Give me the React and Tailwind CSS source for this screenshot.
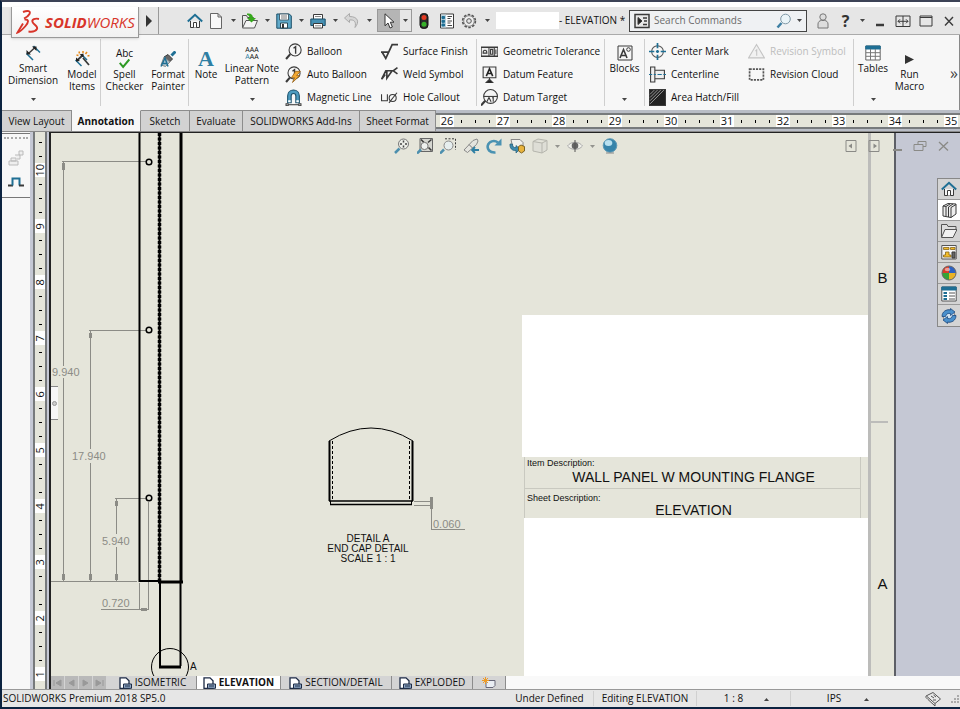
const INK = '#3a3a3a';
const BLUE = '#1f6f94';
const SKY = '#5fa9c9';
const GRAY = '#8a8a86';

function Svg({ children, size = 'size-4' }) {
  return (
    <svg viewBox="0 0 16 16" className={`${size} shrink-0`} fill="none" stroke={INK} strokeWidth="1" aria-hidden="true">
      {children}
    </svg>
  );
}

const ICONS = {
  home: <>
    <path d="M3.5 8v6.5h9V8" fill="#f4f4f4" />
    <path d="M6.5 14.5v-5h3v5" fill="#fff" />
    <path d="M.8 8.6 8 1.8l7.2 6.8" stroke={BLUE} strokeWidth="2" />
  </>,
  page: <path d="M2.500 .5h7.500l3.500 3.500v11.500h-11z M10 .5V4h3.500" fill="#f8f8f8" stroke="#666" />,
  open: <>
    <path d="M.5 14V2.500h4l1 2h6v3" fill="#e9e9e9" stroke="#555" />
    <path d="M.5 15 4 7.500h11.500l-3 7.500z" fill="#f4f4f4" stroke="#555" />
    <path d="M5 .5c4-.5 6 1 6 4.500h3l-4.500 4.500L5 5h2.500c0-2-1-3-2.500-3z" fill="#36a81c" stroke="none" />
  </>,
  save: <>
    <path d="M.8 1h12.500l2 2v12.200H.8z" fill={SKY} stroke="#1b4f69" />
    <path d="M3.500 1h9v6h-9z" fill="#fff" stroke="#46616e" />
    <path d="M5 3h6M5 5h6" stroke="#777" />
    <path d="M4.500 10h7v5h-7z" fill="#fff" stroke="#2a4856" />
    <path d="M6 11h2v4H6z" fill="#333" stroke="none" />
  </>,
  print: <>
    <path d="M3.500 6V1.500h9V6" fill="#fff" />
    <path d="M.8 6h14.400v6.500H.8z" fill="#4690b3" stroke="#1b4f69" />
    <path d="M3.500 10.500h9v4.500h-9z" fill="#fff" />
    <path d="M5 3.500h6M5 12.800h6" stroke="#888" />
  </>,
  undo: <path d="M5.500 .5 .5 5l5 4.500V7C10 6.500 12.500 8.500 11 14.500c4.500-5 3.500-11-5.500-11z" fill="#d6d6d6" stroke="#aaa" />,
  pointer: <path d="M4 .8v12l3-2.800 2 5 2.400-1-2.100-4.800H13z" fill="#fff" stroke="#333" />,
  traffic: <>
    <rect x="4" y=".5" width="8" height="15" rx="3.500" fill="#2b2b2b" stroke="#111" />
    <circle cx="8" cy="4.600" r="2.500" fill="#e23a22" stroke="none" />
    <circle cx="8" cy="11.200" r="2.500" fill="#37b12a" stroke="none" />
  </>,
  options: <>
    <path d="M1.500 1h13v14h-13z" fill="#fff" />
    <path d="M2 1.500h5v13H2z" fill="#bcd3de" stroke="none" />
    <path d="M3 3.500h2.500v2H3z M3 7.300h2.500v2H3z M3 11h2.500v2H3z" fill={BLUE} stroke={BLUE} />
    <path d="M8.500 3.500H13M8.500 5.500h3M8.500 8H13M8.500 10h3M8.500 12.500H13" stroke="#444" />
  </>,
  gear: <>
    <circle cx="8" cy="8" r="6.300" fill="#eee" stroke="#555" strokeWidth="1.800" strokeDasharray="2.500 1.450" />
    <circle cx="8" cy="8" r="5.300" fill="#eee" stroke="#888" />
    <circle cx="8" cy="8" r="2.300" fill="#e6e6e6" stroke="#555" />
  </>,
  user: <>
    <circle cx="8" cy="4" r="3.200" fill="#ddd" stroke="#777" />
    <path d="M3 15v-4c0-2 1.500-3.500 3.500-3.500h3C11.500 7.500 13 9 13 11v4z" fill="#ddd" stroke="#777" />
  </>,
  minimize: <path d="M4 12h8" strokeWidth="2.500" />,
  span: <path d="M1 3h14v10.500H1zM8 3v10.500M3 8.300h10M5 6.300 3 8.300l2 2M11 6.300l2 2-2 2" />,
  maximize: <path d="M2 3h12v10H2zM2 4.500h12" />,
  close: <path d="m4 4 8 8.500M12 4l-8 8.500" strokeWidth="1.400" />,
  prompt: <>
    <path d="M1 1.500h14v13H1z" fill="#e8e8e8" strokeWidth="1.500" />
    <path d="M4 4.500 8 8l-4 3.500z" fill="#222" />
    <path d="M9 5h4M10 8h3M9 11.500h4" strokeWidth="1.500" />
  </>,
  search: <>
    <path d="m1.500 14.500 4-4.500" stroke="#3d7fa3" strokeWidth="2.500" />
    <circle cx="9.500" cy="6" r="4.800" fill="#eaf4f8" stroke="#7e97a5" />
  </>,
  dimension: <>
    <path d="m1.500 8.500 6.500 6.500M8.500 1l6.500 6.500" stroke={BLUE} strokeWidth="1.500" />
    <path d="m3.500 8.500 6.500-6" strokeWidth="1.500" />
    <path d="M1.500 9.500V5l4.500 4.500zM11.500 1.500v4.500L7 1.500z" fill="#222" stroke="none" />
  </>,
  model: <>
    <path d="m1.500 9 6 6M8 4l5 5" stroke={BLUE} strokeWidth="1.500" />
    <path d="m3 9.500 6-5.500M9 7l6 7" strokeWidth="1.800" />
    <path d="M2 10.500v-4l4 3.500zM9.500 2.500v4l-4-3z" fill="#222" stroke="none" />
    <path d="m5 .5.5 2M9 0v2M13 1l-1.500 2M15.500 4.500l-2 .5M2.500 4l2 .5" stroke="#e58a1c" strokeWidth="1.500" />
  </>,
  check: <path d="m1 7 5 6L15 2" stroke="#2f9a25" strokeWidth="3" />,
  painter: <>
    <path d="m15.500 .5-4 4" stroke={BLUE} strokeWidth="3" />
    <path d="m8 3.500 4.500 4.500-3 3-5.500-5z" fill="#666" />
    <path d="m4 6-3 8 4.500 1.500L10 11z" fill="#b7c7d0" stroke="#888" />
    <path d="m1 15.500 4-8.500 3 8.500M3 12.500h4" stroke={BLUE} strokeWidth="1.500" />
  </>,
  balloon: <>
    <path d="m1 15 4-4.500" strokeWidth="2" />
    <circle cx="9.500" cy="6.500" r="5.700" fill="#f6f6f6" />
    <path d="m8 5 2-1.500V10" strokeWidth="1.300" />
  </>,
  autoBalloon: <>
    <path d="m1 15 4-4.500" strokeWidth="2" />
    <circle cx="8.500" cy="6.500" r="5.700" fill="#f6f6f6" />
    <path d="m7 5 2-1.500V8" strokeWidth="1.300" />
    <path d="m10 5-4 6h3l-2 4.500 7-6.500h-3L14.500 5z" fill="#f2a832" stroke="#8f5a12" strokeWidth=".7" />
  </>,
  magnet: <>
    <path d="M2.500 13V6.500C2.500 3 5 1 8 1s5.500 2 5.500 5.500V13h-3.300V6.500C10.200 5 9.300 4.200 8 4.200S5.800 5 5.800 6.500V13z" fill="#4d9cc0" stroke="#1b4f69" />
    <path d="M3 11.500h2.300M10.700 11.500h2.300" stroke="#fff" strokeWidth="2" />
    <path d="M3 14.800h10" />
    <path d="M1 13.800h2v2H1zM13 13.800h2v2h-2z" fill="#fff" />
  </>,
  surface: <path d="M0 8.500h7.500M1 8.500 4.500 14.500 10.500 1.500H16" strokeWidth="1.600" />,
  weld: <path d="m.5 12.500 4-8H12M5.500 4.500v7l5-7M15.500 1.500l-4 3 4 3M1 12l3-4" strokeWidth="1.500" />,
  hole: <>
    <path d="M.5 5v6H6V5" />
    <circle cx="11" cy="8.500" r="3.300" />
    <path d="m7.500 13 7.500-9.500" />
  </>,
  tolerance: <>
    <path d="M0 4h16v8.500H0z" fill="#eee" strokeWidth="1.300" />
    <path d="M7.500 4v8.500M12.500 4v8.500M2 9.500C2 6 5.500 6 5.500 9.500zM9 6h2v4.500H9zM14 6v4.500" />
  </>,
  datum: <>
    <path d="M2 1h12v10H2z" fill="#f4f4f4" />
    <path d="m5 9.500 3-7 3 7M6 7h4" stroke="#222" strokeWidth="1.500" />
    <path d="M8 11v2M4.500 16 8 12.500l3.500 3.500z" fill="#222" />
  </>,
  target: <>
    <circle cx="9" cy="7" r="6.500" fill="#f4f4f4" />
    <path d="M2.500 7h13" />
    <path d="M4 11 0 15.500" strokeWidth="2" />
    <path d="m5.500 12 2-4 2 4M10.500 8.500l1-.5v4" />
  </>,
  blocks: <>
    <path d="M1 1h14v14H1z" fill="#f6f6f6" />
    <path d="m3 13 3.500-8.500L10 13M4 10.500h5" strokeWidth="1.600" />
    <circle cx="11.500" cy="4.500" r="1.800" />
  </>,
  centerMark: <>
    <circle cx="8" cy="8" r="5.500" stroke="#555" />
    <path d="M8 0v5M8 11v5M0 8h5M11 8h5M8 6.500v3M6.500 8h3" stroke={BLUE} strokeWidth="1.600" />
  </>,
  centerline: <>
    <path d="M1.500 1h4v14h-4zM5.500 4h9v8h-9" fill="#eee" />
    <path d="M0 8h3M4.500 8h2M8 8h4M13.500 8H16" stroke={BLUE} />
  </>,
  hatch: <>
    <path d="M.5 .5h15v15H.5z" fill="#222" />
    <path d="M1 5l4-4M1 8l7-7M1 11l10-10M1 14 14 1" stroke="#aaa" strokeWidth=".8" />
  </>,
  revSymbol: <path d="M8 1.500 15.500 14H.5zM7 7.500l1.200-1V12" fill="#f1f1f1" stroke="#c4c4c4" />,
  revCloud: <path d="M1.500 3h13v10h-13z" stroke="#555" strokeWidth="1.600" strokeDasharray="2 1" />,
  table: <>
    <path d="M.8 1h14.400v14H.8z" fill="#fff" stroke="#666" />
    <path d="M.8 1h14.400v3H.8z" fill={BLUE} stroke={BLUE} />
    <path d="M5.500 4v11M10.300 4v11M1 7.700h14M1 11.300h14" stroke="#777" />
  </>,
  zoomFit: <>
    <path d="m1 15 4.500-4.500" stroke="#4c8fae" strokeWidth="2.500" />
    <circle cx="9.500" cy="6" r="5" fill="#eceee8" stroke="#777" />
    <path d="M9.500 2.500v2M9.500 7.500v2M6 6h2M11 6h2" stroke="#444" strokeWidth="1.500" />
  </>,
  zoomArea: <>
    <path d="M3 .5h12.500v13H3z" fill="#d5d6d0" stroke="#666" />
    <path d="m14.500 1.500-3.500 3M14.500 12.500l-3-3M4 1.500l3 3" strokeWidth="1.500" />
    <path d="m0 15.500 4-4" stroke="#4c8fae" strokeWidth="2.500" />
    <circle cx="7.500" cy="8" r="3.600" fill="#eef1ef" stroke="#777" />
  </>,
  zoomSel: <>
    <path d="M5 .8h10.500v11" strokeDasharray="2 1.500" />
    <path d="m0 15.500 4-4" stroke="#4c8fae" strokeWidth="2.500" />
    <circle cx="8.500" cy="7.500" r="4.500" fill="#e6eeee" stroke="#888" />
  </>,
  section: <>
    <path d="m1 12 9-9.500 4-1.500 1 2-1.500 3.500-9 8z" fill="#e4e4de" stroke="#888" />
    <path d="m6 6.500 3.500 3.500" stroke="#777" />
    <path d="M16 12h-6M12 9l-3 3 3 3" stroke="#2f7fa3" strokeWidth="1.800" />
  </>,
  rotate: <>
    <path d="M9.500 14.500C3.500 15 1 11 1.800 7.500c1-4 6.200-6 10.200-3" stroke="#4a92b2" strokeWidth="2.600" />
    <path d="M15.500 .5v7H8.500z" fill="#4a92b2" stroke="none" />
  </>,
  view3d: <>
    <path d="M2 1.500h9l3 3v6H4z" fill="#f0f0ec" stroke="#888" />
    <path d="M1 6c-.5 4 2 7 6 6.500V15l4-4-4-3.500v2C5 9.800 3.500 9 3.500 6z" fill="#3f8aac" stroke="#1f5d7a" strokeWidth=".7" />
    <path d="M9.500 8.500 12 7l3.500 1.500V13l-3 2-3-2z" fill="#e8b33c" stroke="#7d6424" />
  </>,
  cube: <path d="M1 3.500 6 1l9 1.500V12l-5 3-9-2zM1 3.500l9 1.500 5-2.500M10 5v10" fill="#deded6" stroke="#b5b5ad" />,
  eye: <>
    <path d="M.5 8C4 3 12 3 15.500 8 12 12.500 4 12.500.5 8z" fill="#f0f0ea" stroke="#aaa" />
    <circle cx="8" cy="7.800" r="3.300" fill="#666" stroke="none" />
    <path d="M8 2v12" stroke="#555" />
  </>,
  sphere: <>
    <circle cx="8" cy="7.500" r="6.800" fill="#3784aa" stroke="#5f9ab5" />
    <ellipse cx="6.500" cy="5" rx="3.800" ry="3" fill="#b9e0ef" stroke="none" />
    <path d="M4 15h8" stroke="#888" />
  </>,
  dockLeft: <>
    <path d="M3 2.500h10v11H3z" stroke={GRAY} />
    <path d="M9 5.500 5.500 8 9 10.500z" fill={GRAY} stroke="none" />
  </>,
  dockRight: <>
    <path d="M3 2.500h10v11H3z" stroke={GRAY} />
    <path d="M7.500 5.500 11 8l-3.500 2.500z" fill={GRAY} stroke="none" />
  </>,
  docMin: <path d="M4 12h9" stroke={GRAY} strokeWidth="2" />,
  docRestore: <path d="M6 6.500v-3h8v5h-3M2 6.500h9v6H2z" stroke={GRAY} />,
  docClose: <path d="m4 4 9 8.500M13 4l-9 8.500" stroke={GRAY} strokeWidth="1.300" />,
  library: <path d="M2 4 7 1.500l8 .5v10L10 15.500 2 14zM2 4l3 .5v10M5 4.500 9 2M7.500 5v10M7.500 5 12 2M10 5.500v10M10 5.500l5-3" fill="#eee" />,
  folder: <>
    <path d="M.5 14V1.500h5.500l1 2h8V7" fill="#ddd" stroke="#555" />
    <path d="M.5 14.500 4 6.500h12l-4 8z" fill="#f2f2f2" stroke="#555" />
  </>,
  palette: <>
    <path d="M.8 1.500h14.400V15H.8z" fill="#f6f6f6" stroke="#555" />
    <path d="M2.500 3.500h5.500v2H2.500zM9.500 3.500H14v2H9.500zM4.500 8h3.500v3H10v2H2.500v-2h2z" fill="#f4bd2a" stroke="#86641b" strokeWidth=".8" />
    <path d="M11 8h3v6h-3z" fill="#666" />
  </>,
  appearance: <>
    <path d="M8 8V1a7 7 0 0 0-7 7z" fill="#d83b2a" stroke="none" />
    <path d="M8 8V1a7 7 0 0 1 7 7z" fill="#2b62c4" stroke="none" />
    <path d="M8 8h7a7 7 0 0 1-7 7z" fill="#e9b326" stroke="none" />
    <path d="M8 8v7a7 7 0 0 1-7-7z" fill="#35a336" stroke="none" />
    <circle cx="8" cy="8" r="7" stroke="#666" />
    <ellipse cx="6.500" cy="4.500" rx="2.800" ry="1.800" fill="#fff" opacity=".5" stroke="none" />
  </>,
  props: <>
    <path d="M.8 1h14.400v14H.8z" fill="#fff" stroke="#555" />
    <path d="M.8 1h14.400v3H.8z" fill={BLUE} stroke={BLUE} />
    <path d="M2.500 7H6M2.500 10H6M2.500 13H6" stroke={BLUE} strokeWidth="2" />
    <path d="M8 7h6M8 10h6M8 13h6" stroke="#555" />
  </>,
  forum: <>
    <circle cx="8" cy="8" r="6" fill="#cfe1ef" stroke="#777" />
    <path d="M1 8.500C1 3.500 5.500 1 9.500 2V.5l4.500 3.500-4.500 3.500V5.500C7 5 5 6 4.500 8.500zM15 7.500c0 5-4.500 7.500-8.500 6.500v1.500L2 12l4.500-3.500v2c3 .5 4.500-.5 5-3z" fill="#4a90cc" stroke="#204a80" strokeWidth=".8" />
  </>,
  feedback: <path d="M1 5 8 1.500 15.500 8 10 12.500v2.500L3 8.500 1 6.500zM10 12.500 2 5.500M6 5l3 2M8.500 4l2.500 2M8 9h3" fill="#e9e9e9" stroke="#555" />,
};

const Icon = ({ name, size }) => <Svg size={size}>{ICONS[name]}</Svg>;

const Caret = ({ up, className = '' }) => (
  <svg viewBox="0 0 5 3" className={`h-[3px] w-[5px] shrink-0 ${className}`} aria-hidden="true">
    <path d={up ? 'M0 3h5L2.500 0z' : 'M0 0h5L2.500 3z'} fill="#444" />
  </svg>
);

const CaretButton = ({ label }) => (
  <button aria-label={label} className="flex h-full w-[14px] items-center justify-center"><Caret /></button>
);

function QuickAccess() {
  const items = [
    ['New', 'page'], ['Open', 'open'], ['Save', 'save'], ['Print', 'print'], ['Undo', 'undo'],
  ];
  return (
    <div className="ml-[25px] flex h-full shrink-0 items-center">
      <button aria-label="Home" className="flex w-[22px] justify-center"><Icon name="home" /></button>
      {items.map(([label, icon]) => (
        <div key={label} className="flex h-full items-center">
          <button aria-label={label} className="flex w-5 justify-center"><Icon name={icon} /></button>
          <CaretButton label={`${label} menu`} />
        </div>
      ))}
      <div className="ml-px flex h-[23px] border border-[#999]">
        <button aria-label="Select" className="flex w-[22px] items-center justify-center bg-[#b5b5b5]"><Icon name="pointer" /></button>
        <button aria-label="Select menu" className="flex w-[11px] items-center justify-center"><Caret /></button>
      </div>
      <button aria-label="Rebuild" className="flex w-6 justify-center"><Icon name="traffic" /></button>
      <button aria-label="File properties" className="flex w-[22px] justify-center"><Icon name="options" /></button>
      <button aria-label="Options" className="flex w-[22px] justify-center"><Icon name="gear" /></button>
      <CaretButton label="Options menu" />
    </div>
  );
}

function TitleBar() {
  return (
    <header className="relative z-10 flex h-7 items-center border-b border-[#aaa] bg-[#e6e6e6]">
      <div className="ml-[9px] flex h-[31px] w-[128px] shrink-0 items-center gap-[3px] self-start border border-t-0 border-[#999] bg-linear-to-b from-white to-[#f1f1f1] pl-1 shadow-sm">
        <svg viewBox="0 0 26 26" className="size-[26px] shrink-0" fill="none" stroke="#d8352a" strokeWidth="1.900" aria-hidden="true">
          <path d="M7 3c5-2 8-1 6.500 2C12.500 7 10 8.500 8 9.500" />
          <path d="M8.500 10.500c5-.5 4 3 1 6.500S3 23 1.500 23.500L7 14.500" />
          <path d="M23 10c-4-1-7.500.5-6.500 3s6 4.500 4.500 7-5 3-8.500 2.500" />
        </svg>
        <span className="text-[15px] leading-none whitespace-nowrap text-[#d8352a] italic"><b>SOLID</b>WORKS</span>
      </div>
      <button aria-label="Expand menu" className="flex h-full w-5 shrink-0 items-center justify-center border-r border-[#999]">
        <svg viewBox="0 0 6 12" className="h-3 w-[6px]" aria-hidden="true"><path d="M0 0v12l6-6z" fill="#333" /></svg>
      </button>
      <QuickAccess />
      <div className="ml-[2px] h-[17px] w-[63px] shrink-0 bg-white" />
      <h1 className="text-[10px] whitespace-nowrap">- ELEVATION *</h1>
      <label className="ml-auto flex h-[22px] w-[178px] shrink-0 items-center border border-[#444] bg-[#eff1f3] pl-1">
        <Icon name="prompt" />
        <input type="text" aria-label="Search Commands" placeholder="Search Commands" className="ml-1 w-0 flex-1 text-[10px] outline-none placeholder:text-[#6b6b6b]" />
        <Icon name="search" />
        <span className="flex w-[14px] items-center justify-center"><Caret /></span>
      </label>
      <div className="ml-1 flex h-full shrink-0 items-center">
        <button aria-label="Sign in" className="flex w-[23px] justify-center"><Icon name="user" /></button>
        <button aria-label="Help" className="w-[23px] text-[16px] leading-none font-bold text-[#333]">?</button>
        <button aria-label="Help menu" className="flex w-[11px] justify-center"><Caret /></button>
        {['minimize', 'span', 'maximize', 'close'].map(n => (
          <button key={n} aria-label={n} className="flex w-[23px] justify-center"><Icon name={n} /></button>
        ))}
      </div>
    </header>
  );
}

function BigButton({ lines, menu, width, children }) {
  return (
    <button className={`flex shrink-0 flex-col items-center self-stretch pb-[9px] ${menu ? 'pt-[10px]' : 'pt-4'} ${width}`}>
      <span className="flex h-4 items-center justify-center">{children}</span>
      <span className="mt-px flex flex-col items-center leading-3 whitespace-nowrap">
        {lines.map(l => <span key={l}>{l}</span>)}
      </span>
      {menu && <Caret className="mt-auto" />}
    </button>
  );
}

function SmallColumn({ items, width }) {
  return (
    <div className={`flex shrink-0 flex-col pt-[5px] pl-1 ${width}`}>
      {items.map(([label, icon, disabled]) => (
        <button key={label} disabled={disabled} className={`flex h-[23px] items-center gap-[5px] whitespace-nowrap ${disabled ? 'text-[#bdbdbd]' : ''}`}>
          <Icon name={icon} size="size-[17px]" />
          {label}
        </button>
      ))}
    </div>
  );
}

const Divider = () => <span className="my-1 w-px shrink-0 bg-[#cfcfcf]" />;

function Ribbon() {
  return (
    <div className="flex h-[75px] shrink-0 overflow-hidden border-r border-[#888] bg-[#f7f7f7] text-[10px]">
      <BigButton lines={['Smart', 'Dimension']} menu width="w-[62px]"><Icon name="dimension" /></BigButton>
      <BigButton lines={['Model', 'Items']} width="w-[36px]"><Icon name="model" /></BigButton>
      <Divider />
      <BigButton lines={['Spell', 'Checker']} width="w-[47px]">
        <span className="flex flex-col items-center">
          <span className="leading-[9px]">Abc</span>
          <Svg size="size-[11px]">{ICONS.check}</Svg>
        </span>
      </BigButton>
      <BigButton lines={['Format', 'Painter']} width="w-[40px]"><Icon name="painter" /></BigButton>
      <Divider />
      <BigButton lines={['Note']} width="w-[34px]">
        <span className="font-['Liberation_Serif',serif] text-[22px] leading-4 font-bold text-[#2f7fa3]">A</span>
      </BigButton>
      <BigButton lines={['Linear Note', 'Pattern']} menu width="w-[58px]">
        <span className="flex flex-col text-[7px] leading-[7px]"><span>AAA</span><span><span className="text-[#2f7fa3]">A</span>AA</span></span>
      </BigButton>
      <SmallColumn width="w-[96px]" items={[['Balloon', 'balloon'], ['Auto Balloon', 'autoBalloon'], ['Magnetic Line', 'magnet']]} />
      <SmallColumn width="w-[99px]" items={[['Surface Finish', 'surface'], ['Weld Symbol', 'weld'], ['Hole Callout', 'hole']]} />
      <Divider />
      <SmallColumn width="w-[127px]" items={[['Geometric Tolerance', 'tolerance'], ['Datum Feature', 'datum'], ['Datum Target', 'target']]} />
      <Divider />
      <BigButton lines={['Blocks']} menu width="w-[39px]"><Icon name="blocks" /></BigButton>
      <Divider />
      <SmallColumn width="w-[99px]" items={[['Center Mark', 'centerMark'], ['Centerline', 'centerline'], ['Area Hatch/Fill', 'hatch']]} />
      <SmallColumn width="w-[109px]" items={[['Revision Symbol', 'revSymbol', true], ['Revision Cloud', 'revCloud']]} />
      <Divider />
      <BigButton lines={['Tables']} menu width="w-[38px]"><Icon name="table" /></BigButton>
      <BigButton lines={['Run', 'Macro']} width="w-[35px]">
        <svg viewBox="0 0 9 9" className="size-[9px]" aria-hidden="true"><path d="M0 0v9l9-4.500z" fill="#333" /></svg>
      </BigButton>
      <button aria-label="More commands" className="mr-px ml-auto text-[16px] text-[#444]">»</button>
    </div>
  );
}

const TABS = [
  ['View Layout', 'w-[70px]'], ['Annotation', 'w-[69px]'], ['Sketch', 'w-[49px]'],
  ['Evaluate', 'w-[53px]'], ['SOLIDWORKS Add-Ins', 'w-[117px]'], ['Sheet Format', 'w-[76px]'],
];
const TICKS = [1, 2, 3];

function TabRow() {
  return (
    <div className="flex h-[21px] shrink-0 bg-[#b9bdc6]">
      <nav className="flex shrink-0 text-[10px]">
        {TABS.map(([label, width]) => (
          <button
            key={label}
            className={`border-t border-r border-[#8c8c8c] whitespace-nowrap ${width} ${label === 'Annotation' ? 'border-t-[#f7f7f7] bg-[#f7f7f7] font-bold' : 'bg-[#d2d2d2]'}`}
          >
            {label}
          </button>
        ))}
      </nav>
      <div className="mt-[3px] mb-[2px] flex min-w-0 flex-1 overflow-hidden border-2 border-x-0 border-[#777a7c] bg-[#e5e5da] pl-1 text-[11px]">
        {[26, 27, 28, 29, 30, 31, 32, 33, 34, 35].map(n => (
          <div key={n} className="flex w-14 shrink-0 items-center">
            <span className="flex h-full w-[14px] items-center justify-center bg-white">{n}</span>
            {TICKS.map(t => <span key={t} className="flex w-[14px] justify-center"><i className="h-[3px] w-px bg-black" /></span>)}
          </div>
        ))}
      </div>
    </div>
  );
}

function SideRuler() {
  return (
    <div className="flex w-[14px] shrink-0 flex-col overflow-hidden border-x-2 border-[#777a7c] bg-[#e5e5da] pt-[3px] text-[11px]">
      {[10, 9, 8, 7, 6, 5, 4, 3, 2, 1].map((n, i) => (
        <div key={n} className="flex shrink-0 flex-col">
          {TICKS.slice(i === 0 ? 1 : 0).map(t => <span key={t} className="flex h-[14px] items-center justify-center"><i className="h-px w-[3px] bg-black" /></span>)}
          <span className="flex h-[14px] items-center justify-center bg-white"><span className="-rotate-90">{n}</span></span>
        </div>
      ))}
    </div>
  );
}

function SideTools() {
  return (
    <aside className="w-7 shrink-0 bg-[#f7f7f7] pt-px">
      <div className="flex flex-col items-center gap-[7px] border-y border-[#777] pt-[3px] pb-2">
        <span className="w-6 border-t-2 border-dotted border-[#aaa]" />
        <button aria-label="Layers" className="mt-1">
          <Svg><path d="M1 11h9v4H1zM3 8h5v3H3zM7 5h5v4H9M11 1h4v4h-4z" fill="#eee" stroke="#bbb" /></Svg>
        </button>
        <button aria-label="Jog">
          <Svg><path d="M0 12.500h5" strokeWidth="2" /><path d="M4.500 12.500v-7h7v7" stroke={BLUE} strokeWidth="2" /><path d="M11 12.500h5" strokeWidth="2" /></Svg>
        </button>
      </div>
    </aside>
  );
}

// Part elevation with its dimensions, and the enlarged end cap
function Drawing() {
  return (
    <svg viewBox="51 133 471 543" className="block h-[543px] w-[471px] font-['Liberation_Sans',sans-serif]" fill="none" stroke="#8c8c86">
      <g strokeWidth="1">
        <path d="M62 161.500h84M89 330.500h57M115 498.500h31M51 581.500h86" />
        <path d="M63.500 162v204M63.500 378v203M90.500 331v118M90.500 463v118M116.500 499v35M116.500 547v34" />
        <path d="M139.500 583v27M148.500 502v108M101 609.500h48" />
        <path d="M414 501.500h18M414 505.500h18M431.500 498v31M431 529.500h34" />
      </g>
      <g fill="#8c8c86" stroke="none">
        <path d="M62 163h3v7h-3zM89 333h3v5h-3zM115 501h3v5h-3zM62 574h3v6h-3zM89 574h3v6h-3zM115 574h3v6h-3zM141 608h6v3h-6zM430 497h3v12h-3z" />
      </g>
      <g stroke="#000">
        <path d="M139.500 133v448h20" strokeWidth="2" />
        <path d="M181 133v448" strokeWidth="3" />
        <path d="M159.500 133v448" strokeWidth="2" />
        <path d="M159.500 133v448" strokeWidth="3.500" strokeDasharray="3 1.500" />
        <path d="M158 582h25" strokeWidth="3" />
        <path d="M160 582v84M180.500 582v84" strokeWidth="2" />
        <path d="M159 667h22" strokeWidth="3" />
        <circle cx="170" cy="667" r="18.500" />
        <circle cx="149" cy="162" r="2.800" strokeWidth="1.500" />
        <circle cx="149" cy="330" r="2.800" strokeWidth="1.500" />
        <circle cx="149" cy="498" r="2.800" strokeWidth="1.500" />
        <path d="M329 441q42-26 84 0" />
        <path d="M329.500 441v60M412.500 441v60" strokeWidth="2" />
        <path d="M332.500 441v60M409.500 441v60" strokeDasharray="3 2" />
        <path d="M329 501h84M330 504.500h82" strokeWidth="1.500" />
        <path d="M330.500 501v4M411.500 501v4" />
      </g>
      <g fill="#8c8c86" stroke="none" fontSize="11">
        <text x="52" y="376">9.940</text>
        <text x="72" y="460">17.940</text>
        <text x="102" y="545">5.940</text>
        <text x="102" y="607">0.720</text>
        <text x="433" y="528">0.060</text>
      </g>
      <g fill="#111" stroke="none" fontSize="10">
        <text x="190" y="670">A</text>
        <g textAnchor="middle">
          <text x="368" y="542">DETAIL A</text>
          <text x="368" y="552">END CAP DETAIL</text>
          <text x="368" y="562">SCALE 1 : 1</text>
        </g>
      </g>
    </svg>
  );
}

function TitleBlock() {
  return (
    <div className="flex w-[346px] shrink-0 flex-col font-['Liberation_Sans',sans-serif] text-[#111]">
      <div className="h-[182px] shrink-0" />
      <div className="h-[142px] shrink-0 bg-white" />
      <dl className="mr-[7px] ml-[2px] h-[61px] shrink-0 border-x border-[#c9c9c0] leading-none">
        <div className="h-8 border-b border-[#c9c9c0] pt-[2px] pl-[2px]">
          <dt className="text-[9px]">Item Description:</dt>
          <dd className="mt-[2px] text-center text-[14px]">WALL PANEL W MOUNTING FLANGE</dd>
        </div>
        <div className="pt-[5px] pl-[2px]">
          <dt className="text-[9px]">Sheet Description:</dt>
          <dd className="text-center text-[14px]">ELEVATION</dd>
        </div>
      </dl>
      <div className="ml-[2px] flex-1 bg-white" />
    </div>
  );
}

function ZoneStrip() {
  return (
    <div className="flex w-7 shrink-0 flex-col overflow-hidden border-r-2 border-l-3 border-r-[#5d5f66] border-l-[#bcbcba] font-['Liberation_Sans',sans-serif] text-[15px] leading-none text-[#111]">
      <div className="flex h-[288px] shrink-0 items-center justify-center">B</div>
      <div className="mr-[6px] h-[2px] shrink-0 bg-[#bcbcba]" />
      <div className="flex h-[320px] shrink-0 items-center justify-center">A</div>
    </div>
  );
}

function ViewToolbar() {
  const slots = ['zoomFit', 'zoomArea', 'zoomSel', 'section', 'rotate', 'view3d', 'cube', '|', 'eye', '|', 'sphere'];
  return (
    <div className="absolute inset-x-0 top-[5px] flex justify-center">
      {slots.map((n, i) => (n === '|'
        ? <span key={i} className="flex w-3 items-center justify-center opacity-50"><Caret /></span>
        : <button key={i} aria-label={n} className="flex w-[23px] justify-center"><Icon name={n} /></button>))}
    </div>
  );
}

function TaskPane() {
  return (
    <div className="absolute top-[45px] right-0 flex flex-col border border-r-0 border-[#888] bg-[#d4d4d4]">
      {['home', 'library', 'folder', 'palette', 'appearance', 'props', 'forum'].map(n => (
        <button key={n} aria-label={n} className={`flex h-[21px] w-[22px] items-center justify-center border-b border-[#999] last:border-b-0 ${n === 'library' ? 'bg-white' : ''}`}>
          <Icon name={n} />
        </button>
      ))}
    </div>
  );
}

const SheetIcon = () => (
  <svg viewBox="0 0 13 12" className="h-3 w-[13px] shrink-0" fill="#fff" stroke="#1c2a44" aria-hidden="true">
    <path d="M1 .8h6l3 3v7.500H1z" strokeWidth="1.300" />
    <path d="M4.500 7h8v4.300h-8z" fill="#8fa8c6" />
    <path d="M6 9h5" />
  </svg>
);

function SheetTabs() {
  const sheets = [
    ['ISOMETRIC', 'w-[88px]'], ['ELEVATION', 'w-[84px]'], ['SECTION/DETAIL', 'w-[111px]'], ['EXPLODED', 'w-[81px]'],
  ];
  return (
    <nav className="flex h-[13px] shrink-0 items-stretch bg-[#f9f9f9] text-[10px] leading-[13px]">
      <div className="flex w-[58px] gap-px bg-[#d4d4d4]">
        {['M3 3v6M10 3 5 6l5 3z', 'M9 3 4 6l5 3z', 'M4 3l5 3-5 3z', 'M3 3l5 3-5 3zM10 3v6'].map((d, i) => (
          <button key={i} aria-label={['First', 'Previous', 'Next', 'Last'][i]} className="w-[13px] bg-[#b9b9b9]">
            <svg viewBox="0 0 13 12" className="h-3 w-[13px]" fill="#999" stroke="#999"><path d={d} /></svg>
          </button>
        ))}
      </div>
      {sheets.map(([label, width]) => (
        <button
          key={label}
          className={`flex items-center justify-center gap-[3px] border-r border-[#8c8c8c] whitespace-nowrap ${width} ${label === 'ELEVATION' ? 'bg-white font-bold' : 'bg-[#d4d4d4]'}`}
        >
          <SheetIcon />
          {label}
        </button>
      ))}
      <button aria-label="Add sheet" className="flex w-[33px] items-center justify-center border-r border-[#8c8c8c] bg-[#d4d4d4]">
        <svg viewBox="0 0 14 12" className="h-3 w-[14px]" fill="#e9edf2" stroke="#667">
          <path d="M4 3.500h9v5l-2 2H4z" />
          <path d="M3.500 0v7M0 3.500h7M1 1l5 5M6 1 1 6" stroke="#ee9a22" />
        </svg>
      </button>
    </nav>
  );
}

function StatusBar() {
  return (
    <footer className="flex h-[18px] shrink-0 items-center border-t border-[#999] bg-[#e6e6e6] text-[10px] whitespace-nowrap">
      <span className="pl-px">SOLIDWORKS Premium 2018 SP5.0</span>
      <span className="ml-auto w-[83px] pr-1 text-center">Under Defined</span>
      <span className="w-[104px] border-x border-[#d0d0d0] text-center">Editing ELEVATION</span>
      <button className="relative w-[94px] border-r border-[#d0d0d0] pr-5 text-center">
        1 : 8<Caret up className="absolute top-[7px] right-[21px]" />
      </button>
      <button className="relative w-[102px] pr-4 text-center">
        IPS<Caret up className="absolute top-[7px] right-[24px]" />
      </button>
      <button aria-label="Feedback" className="ml-8"><Icon name="feedback" /></button>
      <svg viewBox="0 0 8 8" className="mr-px ml-[10px] size-2" fill="#aaa" aria-hidden="true">
        <path d="M6 0h2v2H6zM3 3h2v2H3zM6 3h2v2H6zM0 6h2v2H0zM3 6h2v2H3zM6 6h2v2H6z" />
      </svg>
    </footer>
  );
}

export default function App() {
  return (
    <div className="flex h-screen flex-col overflow-hidden border-t-2 border-b-2 border-l-2 border-[#0c2340] border-t-[#3c4356] bg-white font-['Open_Sans','Noto_Sans',sans-serif] text-[#111]">
      <div className="h-[5px] shrink-0 bg-white" />
      <TitleBar />
      <Ribbon />
      <TabRow />
      <div className="flex min-h-0 flex-1 border-t border-[#8a8a8a] bg-[#c5c8d4]">
        <SideTools />
        <div className="ml-[3px] flex shrink-0"><SideRuler /></div>
        <div className="ml-[2px] flex min-w-0 flex-1 flex-col border-t border-l-2 border-[#222]">
          <main className="relative flex min-h-0 flex-1 overflow-hidden">
            <div className="flex min-w-0 flex-1 bg-[#e5e5da]">
              <div className="min-w-0 flex-1 overflow-hidden"><Drawing /></div>
              <TitleBlock />
              <ZoneStrip />
            </div>
            <div className="w-16 shrink-0" />
            <button aria-label="Collapse panel" className="absolute top-[253px] -left-px flex h-[34px] w-2 items-center justify-center border-y border-[#888] bg-[#f7f7f7]">
              <span className="size-[5px] rounded-full border border-[#999] bg-[#ccc]" />
            </button>
            <ViewToolbar />
            <div className="absolute top-[5px] right-[6px] flex">
              {['dockLeft', 'dockRight', 'docMin', 'docRestore', 'docClose'].map(n => (
                <button key={n} aria-label={n} className="flex w-[23px] justify-center"><Icon name={n} /></button>
              ))}
            </div>
            <TaskPane />
          </main>
          <SheetTabs />
        </div>
      </div>
      <StatusBar />
    </div>
  );
}
